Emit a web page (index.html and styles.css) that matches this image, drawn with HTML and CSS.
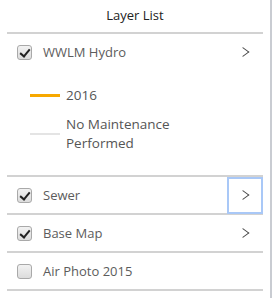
FILE: index.html
```html
<!DOCTYPE html>
<html lang="en">
<head>
    <meta charset="UTF-8">
    <meta name="viewport" content="width=device-width, initial-scale=1.0">
    <title>Layer List</title>
    <link rel="stylesheet" href="styles.css">
</head>
<body>
    <div class="frame">
        <div class="panel">
            <div class="panel-title">Layer List</div>

            <div class="layer">
                <div class="layer-row">
                    <span class="check checked"></span>
                    <span class="layer-name">WWLM Hydro</span>
                    <button class="expand"><span class="chevron"></span></button>
                </div>
                <div class="legend">
                    <div class="legend-item">
                        <span class="swatch swatch-orange"></span>
                        <span class="legend-label">2016</span>
                    </div>
                    <div class="legend-item">
                        <span class="swatch swatch-grey"></span>
                        <span class="legend-label">No Maintenance<br>Performed</span>
                    </div>
                </div>
            </div>

            <div class="layer">
                <div class="layer-row">
                    <span class="check checked"></span>
                    <span class="layer-name">Sewer</span>
                    <button class="expand focused"><span class="chevron"></span></button>
                </div>
            </div>

            <div class="layer">
                <div class="layer-row">
                    <span class="check checked"></span>
                    <span class="layer-name">Base Map</span>
                    <button class="expand"><span class="chevron"></span></button>
                </div>
            </div>

            <div class="layer">
                <div class="layer-row">
                    <span class="check"></span>
                    <span class="layer-name">Air Photo 2015</span>
                </div>
            </div>
        </div>
        <div class="edge"></div>
    </div>
</body>
</html>
```

FILE: styles.css
```css
body {
    margin: 0;
    padding: 0;
    background: white;
    font-family: 'Open Sans', sans-serif;
    font-size: 13px;
}

.frame {
    display: flex;
    height: 298px;
}

.panel {
    width: 256px;
    margin-left: 7px;
}

.edge {
    width: 2px;
    margin-left: 7px;
    background: #c9ccd2;
}

.panel-title {
    height: 32px;
    line-height: 30px;
    text-align: center;
    color: #222;
    border-bottom: 2px solid #d2d2d2;
}

.layer {
    border-bottom: 2px solid #d2d2d2;
}

.layer-row {
    display: flex;
    align-items: center;
    height: 36px;
    padding-left: 10px;
}

.layer:first-of-type .layer-row {
    height: 37px;
}

.check {
    width: 13px;
    height: 13px;
    border: 1px solid #a9a9a9;
    border-radius: 3px;
    background: linear-gradient(#f2f2f2, #dcdcdc);
    position: relative;
    flex-shrink: 0;
}

.check.checked::after {
    content: "";
    position: absolute;
    left: 4px;
    top: 1px;
    width: 4px;
    height: 8px;
    border-right: 2px solid #222;
    border-bottom: 2px solid #222;
    transform: rotate(40deg);
}

.layer-name {
    margin-left: 11px;
    color: #5c5c5c;
    flex: 1;
}

.expand {
    width: 36px;
    height: 37px;
    border: 2px solid transparent;
    background: none;
    padding: 0;
    display: flex;
    align-items: center;
    justify-content: center;
}

.expand.focused {
    border-color: #a9c8f7;
}

.chevron {
    width: 7px;
    height: 7px;
    border-top: 1.4px solid #444;
    border-right: 1.4px solid #444;
    transform: rotate(45deg) skew(-8deg, -8deg);
    margin-left: -5px;
}

.legend {
    padding: 16px 0 22px 23px;
    display: flex;
    flex-direction: column;
    gap: 10px;
}

.legend-item {
    display: flex;
    align-items: center;
}

.swatch {
    width: 30px;
    flex-shrink: 0;
}

.swatch-orange {
    height: 3px;
    background: #f7a800;
}

.swatch-grey {
    height: 2px;
    background: #e4e4e4;
}

.legend-label {
    margin-left: 6px;
    line-height: 19px;
    font-size: 13.5px;
    color: #555;
}
```
